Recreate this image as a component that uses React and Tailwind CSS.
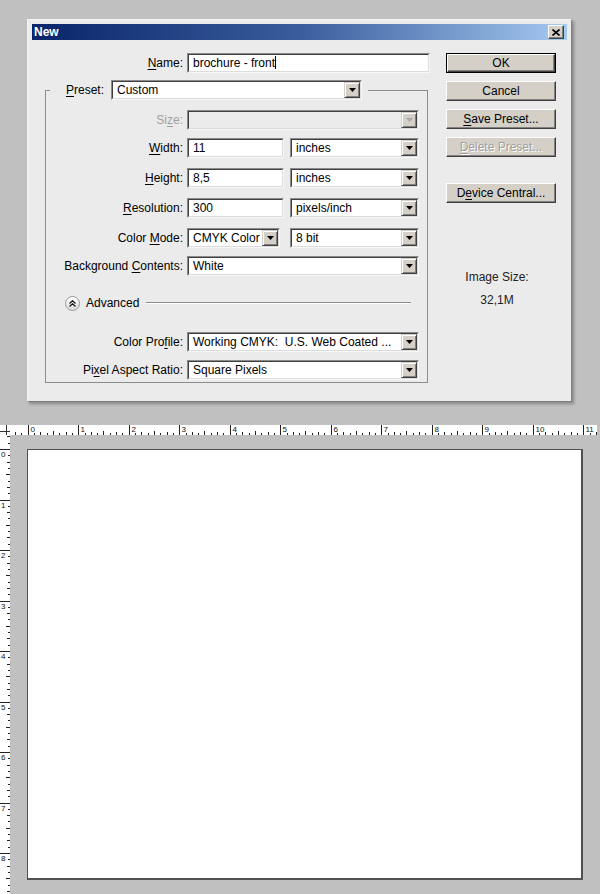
import { Fragment } from 'react';

const FONT = "font-['Liberation_Sans',Arial,sans-serif]";
const INCH = 50.5;

// label with one underlined access-key letter
function Label({ text, u, className = '' }) {
  const i = u == null ? -1 : u;
  return (
    <span className={className}>
      {i < 0 ? text : (
        <Fragment>
          {text.slice(0, i)}
          <u className="underline-offset-2">{text[i]}</u>
          {text.slice(i + 1)}
        </Fragment>
      )}
    </span>
  );
}

function Sunken({ className = '', disabled, children }) {
  return (
    <div className={`border border-t-[#8a8a8a] border-l-[#8a8a8a] border-r-[#f8f8f8] border-b-[#f8f8f8] ${className}`}>
      <div className={`flex h-full border border-t-[#404040] border-l-[#404040] border-r-[#dcdcdc] border-b-[#dcdcdc] ${disabled ? 'bg-[#ebebeb]' : 'bg-white'}`}>
        {children}
      </div>
    </div>
  );
}

function Arrow({ disabled }) {
  return (
    <div className="w-[16px] h-full shrink-0 bg-[#d4d0c8] border border-t-[#d4d0c8] border-l-[#d4d0c8] border-r-[#404040] border-b-[#404040] shadow-[inset_1px_1px_0_#fff,inset_-1px_-1px_0_#808080] flex items-center justify-center">
      <svg width="7" height="4" viewBox="0 0 7 4">
        <path d="M0 0h7L3.5 4z" fill={disabled ? '#a8a8a8' : '#000'} />
      </svg>
    </div>
  );
}

function TextBox({ value, w, caret }) {
  return (
    <Sunken className={`h-[20px] ${w}`}>
      <div className="flex-1 pl-[4px] text-[12px] leading-[16px] text-black whitespace-pre">
        {value}
        {caret && <span className="inline-block w-px h-[13px] bg-black align-[-2px]" />}
      </div>
    </Sunken>
  );
}

function Dropdown({ value, w, disabled }) {
  return (
    <Sunken className={`h-[20px] ${w}`} disabled={disabled}>
      <div className="flex-1 pl-[4px] text-[12px] leading-[16px] text-black whitespace-pre overflow-hidden">{value}</div>
      <Arrow disabled={disabled} />
    </Sunken>
  );
}

function Button({ children, isDefault, disabled, className = '' }) {
  const face = (
    <div className={`h-full flex items-center justify-center bg-[#d4d0c8] border border-t-[#fff] border-l-[#fff] border-r-[#404040] border-b-[#404040] shadow-[inset_-1px_-1px_0_#808080] text-[12px] ${disabled ? 'text-[#a0a0a0] [text-shadow:1px_1px_0_#fff]' : 'text-black'}`}>
      {children}
    </div>
  );
  if (isDefault) {
    return <div className={`h-[20px] w-[110px] border border-black ${className}`}>{face}</div>;
  }
  return <div className={`h-[20px] w-[110px] ${className}`}>{face}</div>;
}

function Row({ label, u, muted, className = '', children }) {
  return (
    <div className={`flex items-center h-[20px] ${className}`}>
      <Label text={label} u={u} className={`w-[137px] text-right text-[12px] ${muted ? 'text-[#a0a0a0]' : 'text-black'}`} />
      <div className="ml-[4px] flex items-center">{children}</div>
    </div>
  );
}

function TopRuler() {
  const width = 587;
  const zero = 17.7;
  const step = INCH / 8;
  const marks = [];
  for (let i = Math.ceil(-zero / step); i * step + zero < width; i++) {
    const x = Math.round(zero + i * step) + 0.5;
    const k = ((i % 8) + 8) % 8;
    const h = k === 0 ? 10 : k === 4 ? 4 : k % 2 === 0 ? 3 : 2;
    marks.push(<line key={i} x1={x} x2={x} y1={10} y2={10 - h} stroke="#222" strokeWidth="1" />);
    if (k === 0 && i >= 0) {
      marks.push(
        <text key={`t${i}`} x={x + 2} y={7} fontSize="8" fontFamily="Liberation Sans, Arial, sans-serif" fill="#111">{i / 8}</text>
      );
    }
  }
  return (
    <svg width={width} height="10" className="block bg-white">
      {marks}
    </svg>
  );
}

function LeftRuler() {
  const height = 459;
  const zero = 14;
  const step = INCH / 8;
  const marks = [];
  for (let i = Math.ceil(-zero / step); i * step + zero < height; i++) {
    const y = Math.round(zero + i * step) + 0.5;
    const k = ((i % 8) + 8) % 8;
    const w = k === 0 ? 10 : k === 4 ? 4 : k % 2 === 0 ? 3 : 2;
    marks.push(<line key={i} y1={y} y2={y} x1={10} x2={10 - w} stroke="#222" strokeWidth="1" />);
    if (k === 0 && i >= 0) {
      marks.push(
        <text key={`t${i}`} x={1} y={y + 7} fontSize="8" fontFamily="Liberation Sans, Arial, sans-serif" fill="#111">{i / 8}</text>
      );
    }
  }
  return (
    <svg width="10" height={height} className="block bg-white">
      {marks}
    </svg>
  );
}

export default function App() {
  return (
    <div className={`${FONT} w-[600px] h-[894px] overflow-hidden bg-[#c0c0c0] pt-[19px]`}>
      {/* dialog */}
      <div className="ml-[27px] w-[545px] h-[383px] bg-[#ebebeb] border border-t-[#f6f6f6] border-l-[#f6f6f6] border-r-[#7f7f7f] border-b-[#7f7f7f] p-[4px] shadow-[2px_2px_3px_rgba(0,0,0,0.3)]">
        <div className="h-[16px] flex items-center bg-linear-to-r from-[#0a246a] via-[#3a5d9c] to-[#a6caf0] pl-[2px] pr-[3px]">
          <span className="text-white font-bold text-[12px] leading-none">New</span>
          <div className="ml-auto w-[16px] h-[14px] bg-[#d4d0c8] border border-t-white border-l-white border-r-[#404040] border-b-[#404040] shadow-[inset_-1px_-1px_0_#808080] flex items-center justify-center">
            <svg width="8" height="7" viewBox="0 0 8 7">
              <path d="M0.5 0.5L7.5 6.5M7.5 0.5L0.5 6.5" stroke="#000" strokeWidth="1.6" />
            </svg>
          </div>
        </div>

        <div className="flex">
          {/* form */}
          <div className="w-[408px]">
            <div className="flex items-center h-[20px] mt-[13px]">
              <Label text="Name:" u={0} className="w-[151px] text-right text-[12px] text-black" />
              <div className="ml-[4px]">
                <TextBox value="brochure - front" w="w-[243px]" caret />
              </div>
            </div>

            <fieldset className="mt-[7px] ml-[13px] w-[383px] border border-[#8c8c8c] pb-[2px]">
              <legend className="ml-[4px] w-[318px] h-[20px] flex items-center pl-[16px]">
                <Label text="Preset:" u={0} className="w-[39px] text-[12px] text-black" />
                <div className="ml-[6px]">
                  <Dropdown value="Custom" w="w-[251px]" />
                </div>
              </legend>

              <Row label="Size:" u={2} muted className="mt-[10px]">
                <Dropdown value="" w="w-[232px]" disabled />
              </Row>
              <Row label="Width:" u={0} className="mt-[8px]">
                <TextBox value="11" w="w-[97px]" />
                <div className="ml-[6px]"><Dropdown value="inches" w="w-[129px]" /></div>
              </Row>
              <Row label="Height:" u={0} className="mt-[10px]">
                <TextBox value="8,5" w="w-[97px]" />
                <div className="ml-[6px]"><Dropdown value="inches" w="w-[129px]" /></div>
              </Row>
              <Row label="Resolution:" u={0} className="mt-[10px]">
                <TextBox value="300" w="w-[97px]" />
                <div className="ml-[6px]"><Dropdown value="pixels/inch" w="w-[129px]" /></div>
              </Row>
              <Row label="Color Mode:" u={6} className="mt-[10px]">
                <Dropdown value="CMYK Color" w="w-[93px]" />
                <div className="ml-[10px]"><Dropdown value="8 bit" w="w-[129px]" /></div>
              </Row>
              <Row label="Background Contents:" u={11} className="mt-[8px]">
                <Dropdown value="White" w="w-[232px]" />
              </Row>

              <div className="flex items-center h-[20px] mt-[17px] pl-[19px] pr-[16px]">
                <div className="w-[15px] h-[15px] rounded-full border border-[#9a9a9a] bg-linear-to-b from-white to-[#dedede] flex items-center justify-center">
                  <svg width="7" height="7" viewBox="0 0 7 7">
                    <path d="M0.5 3.5L3.5 0.8L6.5 3.5M0.5 6.5L3.5 3.8L6.5 6.5" fill="none" stroke="#111" strokeWidth="1.2" />
                  </svg>
                </div>
                <span className="ml-[6px] text-[12px] text-black">Advanced</span>
                <div className="ml-[7px] flex-1 h-[2px] border-t border-[#8c8c8c] border-b border-b-white" />
              </div>

              <Row label="Color Profile:" u={9} className="mt-[19px]">
                <Dropdown value="Working CMYK:  U.S. Web Coated ..." w="w-[232px]" />
              </Row>
              <Row label="Pixel Aspect Ratio:" u={2} className="mt-[8px]">
                <Dropdown value="Square Pixels" w="w-[232px]" />
              </Row>
            </fieldset>
          </div>

          {/* buttons */}
          <div className="ml-[6px] w-[110px] flex flex-col">
            <Button isDefault className="mt-[13px]">OK</Button>
            <Button className="mt-[8px]">Cancel</Button>
            <Button className="mt-[8px]"><Label text="Save Preset..." u={0} /></Button>
            <Button disabled className="mt-[8px]"><Label text="Delete Preset..." u={0} /></Button>
            <Button className="mt-[26px]"><Label text="Device Central..." u={1} /></Button>
            <div className="mt-[66px] pr-[8px] text-center text-[12px] leading-[16px] text-[#222]">Image Size:</div>
            <div className="mt-[7px] pr-[8px] text-center text-[12px] leading-[16px] text-[#222]">32,1M</div>
          </div>
        </div>
      </div>

      {/* document window */}
      <div className="mt-[23px]">
        <div className="flex h-[10px]">
          <svg width="10" height="10" className="block bg-white">
            <line x1="0" x2="10" y1="6.5" y2="6.5" stroke="#333" />
            <line x1="6.5" x2="6.5" y1="0" y2="10" stroke="#333" />
          </svg>
          <TopRuler />
        </div>
        <div className="flex">
          <LeftRuler />
          <div className="pl-[17px] pt-[14px]">
            <div className="w-[556px] h-[431px] bg-white border-l border-t border-r-2 border-b-2 border-[#505050]" />
          </div>
        </div>
      </div>
    </div>
  );
}
